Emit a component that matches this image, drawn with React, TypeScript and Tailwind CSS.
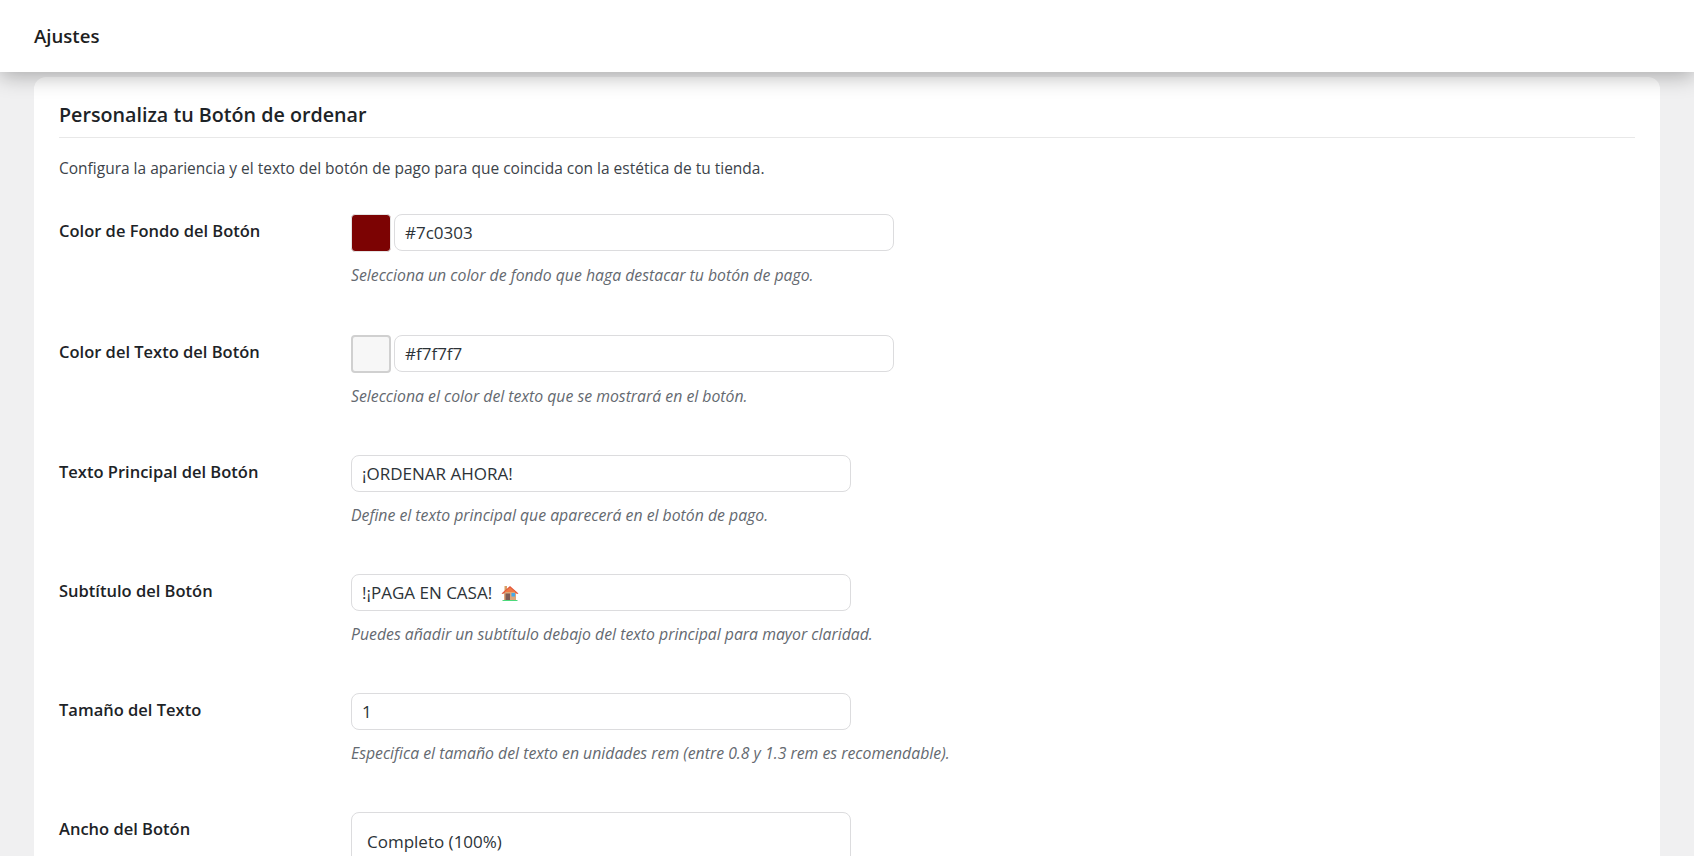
const font = "font-['Open_Sans','Noto_Sans',sans-serif]";

function HouseIcon() {
  return (
    <svg width="18" height="16" viewBox="0 0 18 16" className="ml-[9px] shrink-0">
      <rect x="3.5" y="1" width="2.5" height="5" fill="#d9a066" />
      <rect x="3" y="7" width="12" height="8" fill="#dca67a" />
      <path d="M9 1 L17.5 8.5 L16 9 L9 3.5 L2 9 L0.5 8.5 Z" fill="#e2553a" />
      <path d="M9 2.5 L14.5 7 L3.5 7 Z" fill="#f07a45" />
      <rect x="4.5" y="8.5" width="4.5" height="6.5" fill="#7d5a55" />
      <rect x="10.5" y="8" width="3.5" height="3.5" fill="#45a9e8" />
      <rect x="1.5" y="15" width="15" height="1" fill="#4cd97b" />
    </svg>
  );
}

function Field({ children }: { children: React.ReactNode }) {
  return (
    <div className="flex h-[37px] w-[500px] items-center rounded-lg border border-[#dcdcde] bg-white pl-[10px] text-[17px] text-[#2c3338]">
      {children}
    </div>
  );
}

function Row({ label, hint, height, children }: { label: string; hint: string; height: string; children: React.ReactNode }) {
  return (
    <div className={`grid grid-cols-[292px_1fr] ${height}`}>
      <div className="pt-[6px] text-[16.5px] leading-[22px] font-semibold text-[#1d2327]">{label}</div>
      <div>
        {children}
        <p className="mt-[13px] text-[15.8px] leading-[21px] text-[#646970] italic">{hint}</p>
      </div>
    </div>
  );
}

function Swatch({ color, light }: { color: string; light?: boolean }) {
  return (
    <div
      className={`h-[38px] w-[40px] shrink-0 rounded-[4px] ${light ? "border-2 border-[#d0d0d0]" : "border border-[#e4e4e4]"}`}
      style={{ backgroundColor: color }}
    />
  );
}

export default function App() {
  return (
    <div className={`h-[856px] w-full overflow-hidden bg-[#f0f0f1] ${font}`}>
      <header className="relative z-10 flex h-[72px] items-center bg-white pl-[34px] text-[18.6px] font-semibold text-[#1e1e1e] shadow-[0_4px_20px_rgba(0,0,0,0.3)]">
        Ajustes
      </header>
      <div className="px-[34px] pt-[5px]">
        <main className="h-[900px] rounded-xl bg-white px-[25px] pt-[23px]">
          <h2 className="border-b border-[#e8e8e8] pb-[8px] text-[19.7px] leading-[29px] font-semibold text-[#1d2327]">
            Personaliza tu Botón de ordenar
          </h2>
          <p className="mt-[19px] text-[15.5px] leading-[22px] text-[#3c434a]">
            Configura la apariencia y el texto del botón de pago para que coincida con la estética de tu tienda.
          </p>
          <div className="mt-[35px]">
            <Row label="Color de Fondo del Botón" hint="Selecciona un color de fondo que haga destacar tu botón de pago." height="h-[121px]">
              <div className="flex gap-[3px]">
                <Swatch color="#7c0303" />
                <Field>#7c0303</Field>
              </div>
            </Row>
            <Row label="Color del Texto del Botón" hint="Selecciona el color del texto que se mostrará en el botón." height="h-[120px]">
              <div className="flex gap-[3px]">
                <Swatch color="#f7f7f7" light />
                <Field>#f7f7f7</Field>
              </div>
            </Row>
            <Row label="Texto Principal del Botón" hint="Define el texto principal que aparecerá en el botón de pago." height="h-[119px]">
              <Field>¡ORDENAR AHORA!</Field>
            </Row>
            <Row label="Subtítulo del Botón" hint="Puedes añadir un subtítulo debajo del texto principal para mayor claridad." height="h-[119px]">
              <Field>
                !¡PAGA EN CASA!
                <HouseIcon />
              </Field>
            </Row>
            <Row label="Tamaño del Texto" hint="Especifica el tamaño del texto en unidades rem (entre 0.8 y 1.3 rem es recomendable)." height="h-[119px]">
              <Field>1</Field>
            </Row>
            <Row label="Ancho del Botón" hint="" height="h-[119px]">
              <div className="flex h-[60px] w-[500px] items-center rounded-lg border border-[#dcdcde] bg-white pl-[15px] text-[17px] text-[#2c3338]">
                Completo (100%)
              </div>
            </Row>
          </div>
        </main>
      </div>
    </div>
  );
}
